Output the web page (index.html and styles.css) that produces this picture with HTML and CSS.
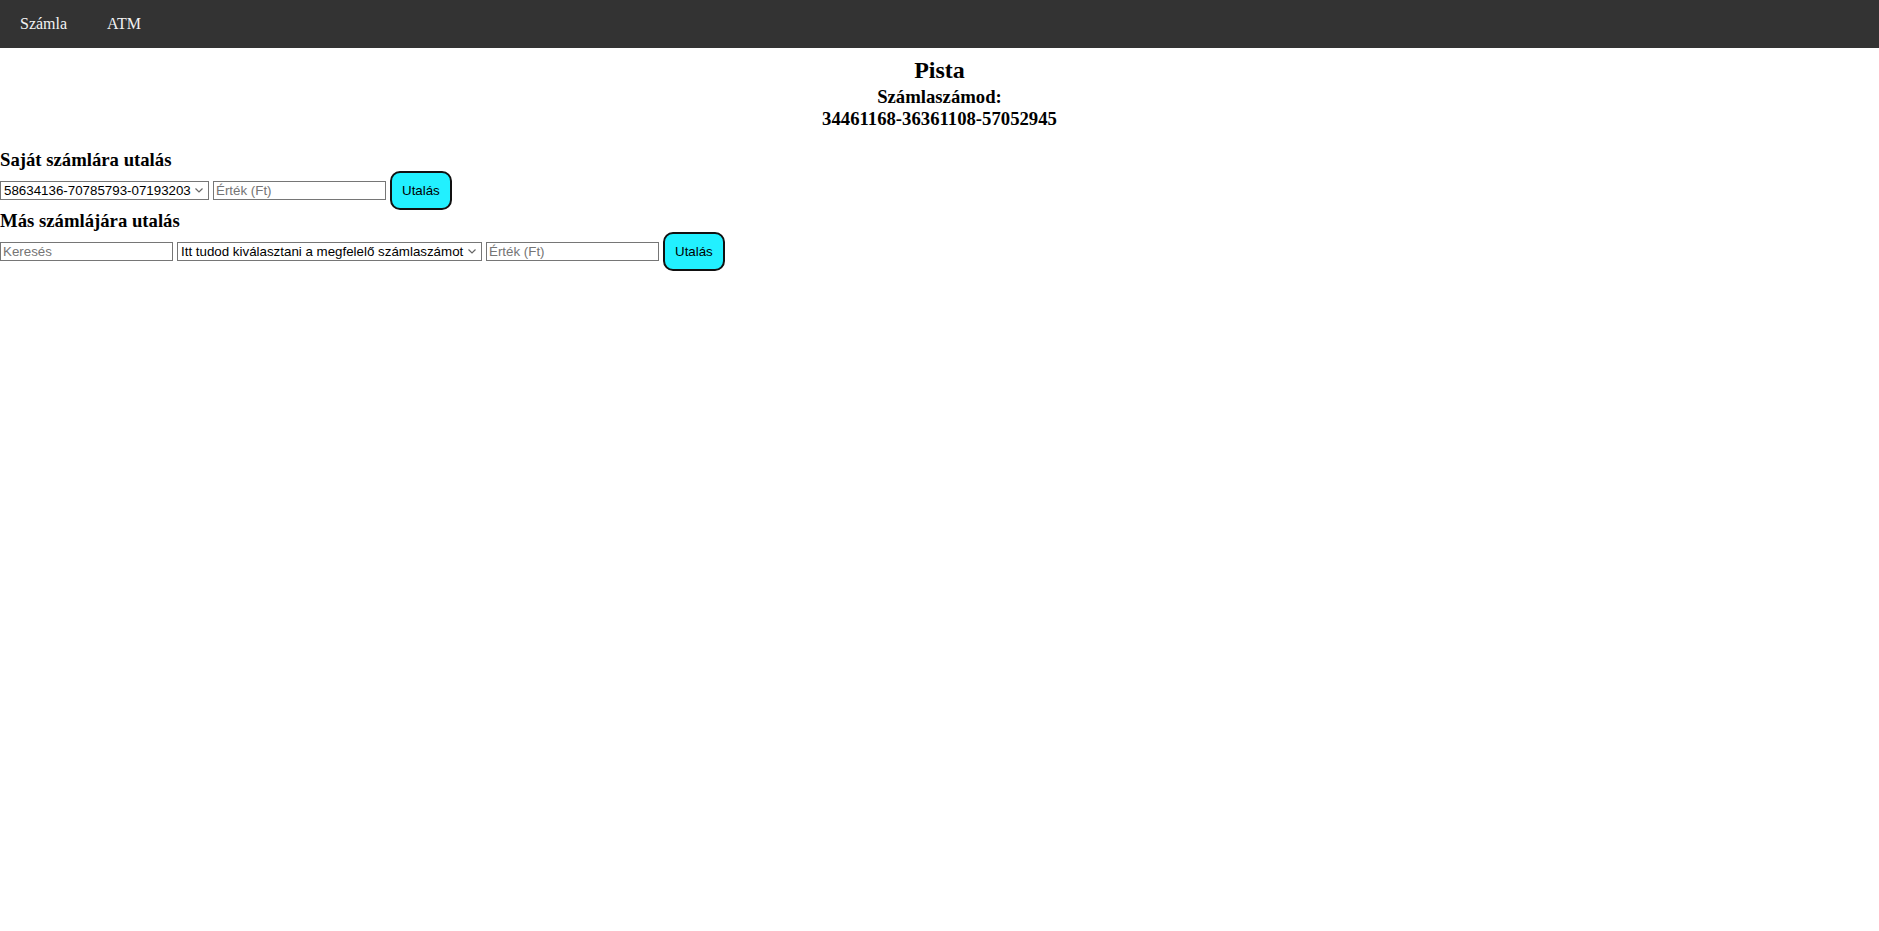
FILE: index.html
```html
<!DOCTYPE html>
<html lang="hu">
<head>
<meta charset="utf-8">
<title>Bank</title>
<link rel="stylesheet" href="styles.css">
</head>
<body>
<nav class="topnav">
  <a href="#">Számla</a>
  <a href="#">ATM</a>
</nav>
<div class="header">
  <h2 class="name">Pista</h2>
  <h3 class="account">Számlaszámod:<br>34461168-36361108-57052945</h3>
</div>
<h3 class="section first">Saját számlára utalás</h3>
<div class="row">
  <select class="ctl pick own"><option>58634136-70785793-07193203</option></select>
  <input class="ctl field" type="text" placeholder="Érték (Ft)">
  <button class="send">Utalás</button>
</div>
<h3 class="section">Más számlájára utalás</h3>
<div class="row">
  <input class="ctl field" type="text" placeholder="Keresés">
  <select class="ctl pick other"><option>Itt tudod kiválasztani a megfelelő számlaszámot</option></select>
  <input class="ctl field" type="text" placeholder="Érték (Ft)">
  <button class="send">Utalás</button>
</div>
</body>
</html>
```
FILE: styles.css
```css
body {
  margin: 0;
  font-family: "Liberation Serif", "Times New Roman", serif;
  font-size: 16px;
  color: #000;
  background: #fff;
}
.topnav {
  display: flex;
  background: #333;
  height: 48px;
}
.topnav a {
  display: block;
  color: #f2f2f2;
  text-decoration: none;
  font-size: 16px;
  padding: 14px 20px;
  line-height: 20px;
}
.header {
  text-align: center;
}
.name {
  margin: 9px 0 0;
  font-size: 24px;
}
.account {
  margin: 2px 0 0;
  font-size: 18.72px;
}
.section {
  margin: 0;
  font-size: 18.72px;
}
.section.first {
  margin-top: 19px;
}
.row {
  font-size: 16px;
}
.ctl {
  font-family: "Liberation Sans", Arial, sans-serif;
  font-size: 13.333px;
  margin: 0;
  box-sizing: border-box;
  height: 19px;
  border: 1px solid #767676;
  border-radius: 0;
  background-color: #fff;
  color: #000;
}
.field {
  width: 173px;
  padding: 1px 2px;
}
.field::placeholder {
  color: #757575;
}
.pick {
  -webkit-appearance: none;
  appearance: none;
  padding: 0 16px 0 3px;
  background-image: url("data:image/svg+xml;utf8,<svg xmlns='http://www.w3.org/2000/svg' width='8' height='5' viewBox='0 0 8 5'><path d='M0.5 0.5 L4 4 L7.5 0.5' fill='none' stroke='%23666' stroke-width='1.2'/></svg>");
  background-repeat: no-repeat;
  background-position: right 5px center;
}
.own {
  width: 209px;
}
.other {
  width: 305px;
}
.send {
  font-family: "Liberation Sans", Arial, sans-serif;
  font-size: 13.333px;
  background: #22f0ff;
  color: #000;
  border: 2px solid #111;
  border-radius: 10px;
  padding: 10px;
  margin: 0;
}
```
